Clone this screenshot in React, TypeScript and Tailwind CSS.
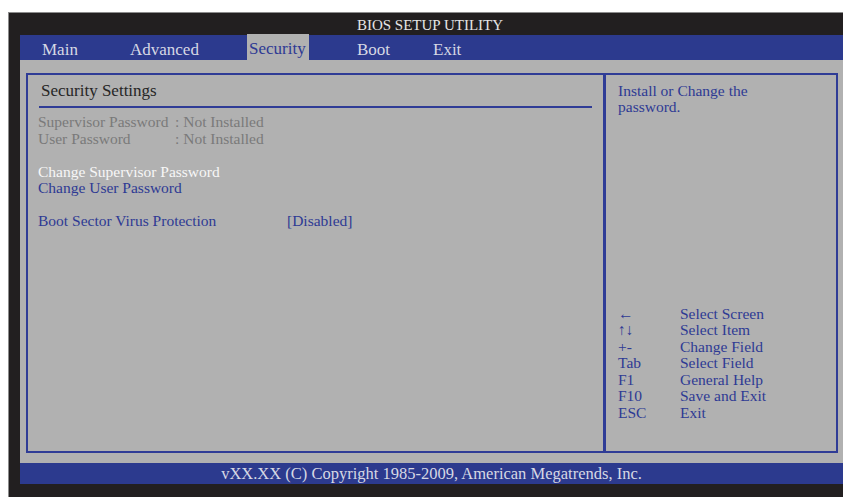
const tabs = [
  { label: 'Main', box: 'w-[88px] ml-[22px]' },
  { label: 'Advanced', box: 'w-[117px]' },
  { label: 'Security', box: 'w-[62px] px-[2px]', active: true },
  { label: 'Boot', box: 'w-[76px] ml-[48px]' },
  { label: 'Exit', box: 'w-[60px]' },
];

const help = [
  ['←', 'Select Screen'],
  ['↑↓', 'Select Item'],
  ['+-', 'Change Field'],
  ['Tab', 'Select Field'],
  ['F1', 'General Help'],
  ['F10', 'Save and Exit'],
  ['ESC', 'Exit'],
];

export default function App() {
  return (
    <div
      className="h-[497px] w-[843px] overflow-hidden bg-white pt-[12px] pl-[8px]"
      style={{ fontFamily: '"Liberation Serif", serif' }}
    >
      <div className="flex h-[485px] w-[835px] flex-col border-l border-t border-[#8c8c8c] bg-[#221f20] pl-[11px]">
        {/* title */}
        <div className="flex h-[22px] items-center justify-center pt-[2px] pr-[3px] text-[15px] leading-none text-[#e6e6e6]">
          BIOS SETUP UTILITY
        </div>

        {/* menu bar */}
        <div className="flex h-[25px] items-stretch bg-[#2c3a8e] text-[17px] leading-none text-[#d6d8e4]">
          {tabs.map((t) => (
            <div
              key={t.label}
              className={`${t.box} flex items-center pt-[3px] ${
                t.active ? '-mt-px bg-[#b1b1b1] text-[#2e3a94]' : ''
              }`}
            >
              {t.label}
            </div>
          ))}
        </div>

        {/* body */}
        <div className="flex h-[403px] flex-col bg-[#b1b1b1] pt-[13px] pl-[6px] pr-[5px]">
          <div className="flex h-[380px] border-2 border-[#2f3c96] text-[15.5px] leading-[16.5px]">
            {/* left panel */}
            <div className="flex w-[578px] flex-col border-r-[3px] border-[#2f3c96]">
              <div className="pl-[13px] pt-[6px] text-[17px] leading-[20px] text-[#262626]">Security Settings</div>
              <div className="mx-[11px] mt-[5px] h-[2px] bg-[#2f3c96]" />
              <div className="mt-[6px] pl-[10px] text-[#7a7a7a]">
                <div className="flex">
                  <span className="w-[137px]">Supervisor Password</span>
                  <span>: Not Installed</span>
                </div>
                <div className="flex">
                  <span className="w-[137px]">User Password</span>
                  <span>: Not Installed</span>
                </div>
              </div>
              <div className="mt-[16.5px] pl-[10px]">
                <div className="text-[#f7f7f7]">Change Supervisor Password</div>
                <div className="text-[#2e3a94]">Change User Password</div>
              </div>
              <div className="mt-[16.5px] flex pl-[10px] text-[#2e3a94]">
                <span className="w-[249px]">Boot Sector Virus Protection</span>
                <span>[Disabled]</span>
              </div>
            </div>

            {/* right panel */}
            <div className="flex flex-1 flex-col pl-[12px] pt-[8px] text-[#2e3a94]">
              <div className="w-[170px] leading-[16px]">Install or Change the password.</div>
              <div className="mt-auto mb-[30px]">
                {help.map(([k, v]) => (
                  <div key={k} className="flex">
                    <span className="w-[62px]">{k}</span>
                    <span>{v}</span>
                  </div>
                ))}
              </div>
            </div>
          </div>
        </div>

        {/* footer */}
        <div className="flex h-[21px] items-center justify-center bg-[#2c3a8e] pt-[1px] text-[16.5px] leading-none text-[#d6d8e4]">
          vXX.XX (C) Copyright 1985-2009, American Megatrends, Inc.
        </div>
      </div>
    </div>
  );
}
